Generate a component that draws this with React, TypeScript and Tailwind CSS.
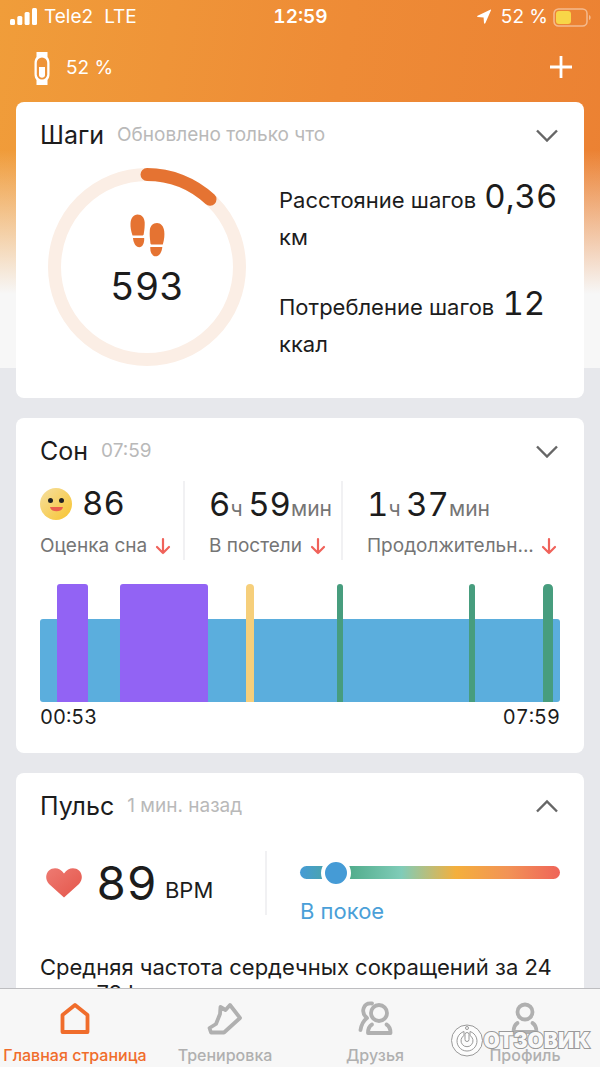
import type { ReactNode } from "react";

type CardProps = {
  title: string;
  note: string;
  open?: boolean;
  children: ReactNode;
}

const stages = [
  { x: 17, width: 31, color: "#9263f4", r: 3 },
  { x: 80, width: 88, color: "#9263f4", r: 3 },
  { x: 206, width: 8, color: "#f6cf7b", r: 4 },
  { x: 297, width: 6, color: "#479d7e", r: 3 },
  { x: 429, width: 6, color: "#479d7e", r: 3 },
  { x: 503, width: 10, color: "#479d7e", r: 5 },
]

const tabs = [
  {
    name: "Главная страница",
    active: true,
    icon: <path d="M4.500 31V14L17 4l12.500 10v17z" />,
  },
  {
    name: "Тренировка",
    icon: <path d="M12.500 6l5 3L22 4l10 13-16 14.500H3L1.500 27 8 23l4-10z" />,
  },
  {
    name: "Друзья",
    icon: (
      <>
        <circle cx="21" cy="12" r="8" />
        <path d="M14 2.500C5.500 1.500 2 11 9 17c-4 3-5.500 6-6.500 12" />
        <path d="M14 23.500c-2.500 1.500-4 4-4 8.500h22.500c0-4.500-1.500-7-4-8.500" />
      </>
    ),
  },
  {
    name: "Профиль",
    icon: (
      <>
        <circle cx="17" cy="11" r="7.500" />
        <path d="M9.500 22c-2.500 1.500-4 4-4 9h23c0-5-1.500-7.500-4-9" />
      </>
    ),
  },
]

function Card({ title, note, open, children }: CardProps) {
  return (
    <section className="rounded-lg bg-white px-6 pt-[17px]">
      <div className="flex h-8 items-center justify-between">
        <div className="flex items-center gap-[13px]">
          <h2 className="text-[25px] leading-8">{title}</h2>
          <span className="text-[19px] leading-8 text-[#b9b9b9]">{note}</span>
        </div>
        <button aria-label={open ? "Свернуть" : "Развернуть"} className="mr-px">
          <svg width="24" height="14" viewBox="0 0 24 14" fill="none" stroke="#666" strokeWidth="2.4">
            <path d={open ? "M2 12.500L12 2.500l10 10" : "M2 2.500l10 10 10-10"} />
          </svg>
        </button>
      </div>
      {children}
    </section>
  )
}

function DownArrow() {
  return (
    <svg className="shrink-0" width="16" height="18" viewBox="0 0 16 18" fill="none" stroke="#f0625a" strokeWidth="2.2" strokeLinecap="round" strokeLinejoin="round">
      <path d="M8 2v14M2 10l6 6 6-6" />
    </svg>
  )
}

function Duration({ hours, minutes }: { hours: number; minutes: number }) {
  return (
    <div className="h-[46px] text-[33px] leading-[46px] whitespace-nowrap tabular-nums">
      {hours}<span className="text-[21px] text-[#757575]">ч </span>
      {minutes}<span className="text-[21px] text-[#757575]">мин</span>
    </div>
  )
}

function StatusBar() {
  return (
    <div className="grid h-[34px] grid-cols-3 items-center pr-[9px] pl-[10px] text-[19px]">
      <div className="flex items-center gap-[7px]">
        <svg width="27" height="18" viewBox="0 0 27 18" fill="#fff">
          <rect x="0" y="11" width="5" height="6" rx="1.5" />
          <rect x="7.3" y="8" width="5" height="9" rx="1.5" />
          <rect x="14.6" y="4" width="5" height="13" rx="1.5" />
          <rect x="22" y="0" width="5" height="17" rx="1.5" />
        </svg>
        <span>Tele2</span>
        <span className="ml-1">LTE</span>
      </div>
      <div className="text-center font-semibold tabular-nums">12:59</div>
      <div className="flex items-center justify-end gap-[5px]">
        <svg className="mr-1" width="16" height="16" viewBox="0 0 16 16" fill="#fff">
          <path d="M15 1.200L9.300 14.300c-.3.600-1.200.6-1.300-.2L7.600 8.500 1.800 8c-.8-.1-.9-1-.2-1.300L14.200.7c.6-.2 1 0 .8.500z" />
        </svg>
        <span>52 %</span>
        <svg width="38" height="19" viewBox="0 0 38 19">
          <rect x="1" y="1" width="33" height="17" rx="4.5" fill="none" stroke="#fff" strokeOpacity=".45" strokeWidth="1.5" />
          <rect x="3" y="3" width="15" height="13" rx="3" fill="#f8d648" />
          <path d="M36 7c2.200.8 2.200 4.200 0 5z" fill="#fff" fillOpacity=".45" />
        </svg>
      </div>
    </div>
  )
}

function Steps() {
  return (
    <Card title="Шаги" note="Обновлено только что">
      <div className="flex gap-[33px] pt-[17px] pb-8 pl-2">
        <div className="relative shrink-0">
          <svg width="198" height="198" viewBox="0 0 198 198" fill="none" strokeWidth="13">
            <circle cx="99" cy="99" r="92.5" stroke="#fbeee5" />
            <path d="M99 6.500A92.500 92.500 0 0 1 162 31.300" stroke="#e57332" strokeLinecap="round" />
          </svg>
          <div className="absolute inset-0 flex flex-col items-center pt-[46px]">
            <svg width="36" height="43" viewBox="0 0 36 43" fill="#e57332">
              <path d="M3.500 21.500C2 17 1.300 13 1.500 9.500 1.800 4 4.500.5 8.500.5c4.200 0 7 3.200 7.200 8 .1 4-.2 7-.9 11 0 1.500-.5 2-2 2z" />
              <path d="M4 24h11.200c.3 5-1.700 9.300-5 9.300C7 33.300 4.500 29.500 4 24z" />
              <path d="M23.300 30.500c-1.600 0-2-.5-2-2.500-.5-5-.8-7-.5-11.500.3-4.500 3-7.500 7.200-7.500 3.800 0 6.600 3 7.200 8 .5 4 .2 8-1.400 13.500z" />
              <path d="M21.300 33h12c-.5 5.500-3 9.300-6.800 9.300-3.200 0-5.700-4-5.200-9.300z" />
            </svg>
            <div className="mt-[7px] text-[38px] leading-[44px] tabular-nums">593</div>
          </div>
        </div>
        <div className="flex flex-col gap-[31px] pt-3 text-[22px] leading-[37px]">
          <p>Расстояние шагов <span className="pl-[2px] text-[33px] leading-none tabular-nums">0,36</span> км</p>
          <p>Потребление шагов <span className="pl-[2px] text-[33px] leading-none tabular-nums">12</span> ккал</p>
        </div>
      </div>
    </Card>
  )
}

function Sleep() {
  return (
    <Card title="Сон" note="07:59">
      <div className="flex pt-[14px]">
        <div className="flex w-[145px] shrink-0 flex-col gap-[5px] border-r-2 border-[#f1f1f3]">
          <div className="flex h-[46px] items-center gap-[10px] text-[33px] tabular-nums">
            <svg width="32" height="32" viewBox="0 0 32 32">
              <defs>
                <linearGradient id="face" x1="0" y1="0" x2="1" y2="1">
                  <stop offset="0" stopColor="#f5dfa0" />
                  <stop offset="1" stopColor="#f8c42f" />
                </linearGradient>
              </defs>
              <circle cx="16" cy="16" r="16" fill="url(#face)" />
              <circle cx="10.500" cy="12.500" r="2.500" fill="#222" />
              <circle cx="21.500" cy="12.500" r="2.500" fill="#222" />
              <path d="M10 19h13c-.6 2.800-3 4.300-6.500 4.300S10.600 21.800 10 19z" fill="#ec5f4d" />
            </svg>
            <span>86</span>
          </div>
          <div className="flex h-7 items-center gap-2 text-[19px] text-[#757575]">
            Оценка сна <DownArrow />
          </div>
        </div>
        <div className="flex w-[158px] shrink-0 flex-col gap-[5px] border-r-2 border-[#f1f1f3] pl-6">
          <Duration hours={6} minutes={59} />
          <div className="flex h-7 items-center gap-2 text-[19px] whitespace-nowrap text-[#757575]">
            В постели <DownArrow />
          </div>
        </div>
        <div className="flex min-w-0 flex-1 flex-col gap-[5px] pl-6">
          <Duration hours={1} minutes={37} />
          <div className="flex h-7 items-center gap-[7px] text-[19px] text-[#757575]">
            <span className="whitespace-nowrap">Продолжительн...</span> <DownArrow />
          </div>
        </div>
      </div>
      <svg className="mt-6 w-full" viewBox="0 0 520 118">
        <rect x="0" y="35" width="520" height="83" rx="3" fill="#5baedd" />
        {stages.map((s) => (
          <path
            key={s.x}
            fill={s.color}
            d={`M${s.x} 118V${s.r}q0-${s.r} ${s.r}-${s.r}h${s.width - s.r * 2}q${s.r} 0 ${s.r} ${s.r}V118z`}
          />
        ))}
      </svg>
      <div className="flex justify-between pb-[21px] text-[20px] leading-[30px] tabular-nums">
        <span>00:53</span>
        <span>07:59</span>
      </div>
    </Card>
  )
}

function Pulse() {
  return (
    <Card title="Пульс" note="1 мин. назад" open>
      <div className="flex pt-[29px]">
        <div className="flex h-16 w-[227px] shrink-0 items-center border-r-2 border-[#f1f1f3] pl-[6px]">
          <svg width="36" height="30" viewBox="0 0 36 30">
            <defs>
              <linearGradient id="heart" x1="0" y1="0" x2="1" y2="1">
                <stop offset="0" stopColor="#ee7a72" />
                <stop offset="1" stopColor="#e4564a" />
              </linearGradient>
            </defs>
            <path d="M18 29.500L3 16C-1 12-.5 5.500 3 2.500c4-3.500 11-3.200 15 3 4-6.200 11-6.500 15-3 3.500 3 4 9.500 0 13.500z" fill="url(#heart)" />
          </svg>
          <div className="ml-[14px] flex items-end gap-2">
            <span className="text-[47px] leading-[64px] tabular-nums">89</span>
            <span className="text-[22px] leading-[50px]">BPM</span>
          </div>
        </div>
        <div className="flex flex-1 flex-col pt-[15px] pl-[33px]">
          <input
            type="range"
            aria-label="Зона пульса"
            min={0}
            max={100}
            defaultValue={9}
            className="h-[13px] w-full appearance-none rounded-full bg-[linear-gradient(to_right,#459bd6,#4fab8a_18%,#80ccb8_39%,#f4af3c_60%,#f29356_80%,#ef6459)] [&::-webkit-slider-thumb]:size-[30px] [&::-webkit-slider-thumb]:appearance-none [&::-webkit-slider-thumb]:rounded-full [&::-webkit-slider-thumb]:border-4 [&::-webkit-slider-thumb]:border-white [&::-webkit-slider-thumb]:bg-[#459bd6]"
          />
          <div className="mt-4 text-[22px] leading-8 text-[#4a9fd8]">В покое</div>
        </div>
      </div>
      <p className="pt-[27px] pb-6 text-[22px] leading-[26px]">
        Средняя частота сердечных сокращений за 24 часа 78 bpm
      </p>
    </Card>
  )
}

export default function App() {
  return (
    <div className="flex h-screen flex-col bg-[linear-gradient(to_bottom,transparent_150px,#f7f7f7_294px,#f7f7f7_368px,#e7e8ec_368px),linear-gradient(100deg,#f09d3a,#ee8b36_45%,#ea7c31)] font-['Inter','Liberation_Sans',sans-serif] text-[#1c1c1c]">
      <header className="shrink-0 text-white">
        <StatusBar />
        <div className="flex h-[68px] items-center justify-between pr-7 pl-[34px]">
          <div className="flex items-center gap-4 text-[19px]">
            <svg width="16" height="33" viewBox="0 0 16 33">
              <path d="M2.500 0h11v5c1.300 1.500 2 3.500 2 6v11c0 2.500-.7 4.500-2 6v5h-11v-5c-1.300-1.500-2-3.500-2-6V11c0-2.500.7-4.500 2-6z" fill="#fff" />
              <rect x="2.800" y="5.500" width="10.400" height="22" rx="5.200" fill="#ee9338" />
              <path d="M5 15h6v8c0 3.500-6 3.500-6 0z" fill="#fff" />
            </svg>
            <span>52 %</span>
          </div>
          <button aria-label="Добавить">
            <svg width="22" height="24" viewBox="0 0 22 24" stroke="#fff" strokeWidth="2.800">
              <path d="M11 0v22M0 11h22" />
            </svg>
          </button>
        </div>
      </header>
      <main className="flex min-h-0 flex-1 flex-col gap-5 overflow-y-auto px-4 [scrollbar-width:none] *:shrink-0">
        <Steps />
        <Sleep />
        <Pulse />
      </main>
      <nav className="relative grid h-[79px] shrink-0 grid-cols-4 border-t border-[#bdbdc0] bg-[#f7f7f7]">
        {tabs.map((tab) => (
          <button
            key={tab.name}
            className={`flex flex-col items-center gap-2 pt-3 text-[16px] leading-6 font-medium whitespace-nowrap ${tab.active ? "text-[#f06d2c]" : "text-[#b0b0b0]"}`}
          >
            <svg width="36" height="34" viewBox="-1 0 36 34" fill="none" stroke="currentColor" strokeWidth="3.800" strokeLinecap="round" strokeLinejoin="round">
              {tab.icon}
            </svg>
            {tab.name}
          </button>
        ))}
        <div className="pointer-events-none absolute right-[10px] bottom-[10px] flex items-center gap-px">
          <svg width="32" height="33" viewBox="0 0 32 33" fill="none" stroke="#999">
            <circle cx="16" cy="16.500" r="15.500" fill="#fff" fillOpacity=".6" />
            <path d="M13 7.500a10 10 0 1 0 6 0v4a6 6 0 1 1-6 0z" fill="#fff" />
            <rect x="14" y="8.500" width="4" height="9" rx="2" fill="#fff" />
            <circle cx="16" cy="4" r="1.500" />
          </svg>
          <span className="text-[21px] leading-6 font-black text-[#f9f9f9] [-webkit-text-stroke:2px_#999] [paint-order:stroke_fill]">ОТЗОВИК</span>
        </div>
      </nav>
    </div>
  )
}
